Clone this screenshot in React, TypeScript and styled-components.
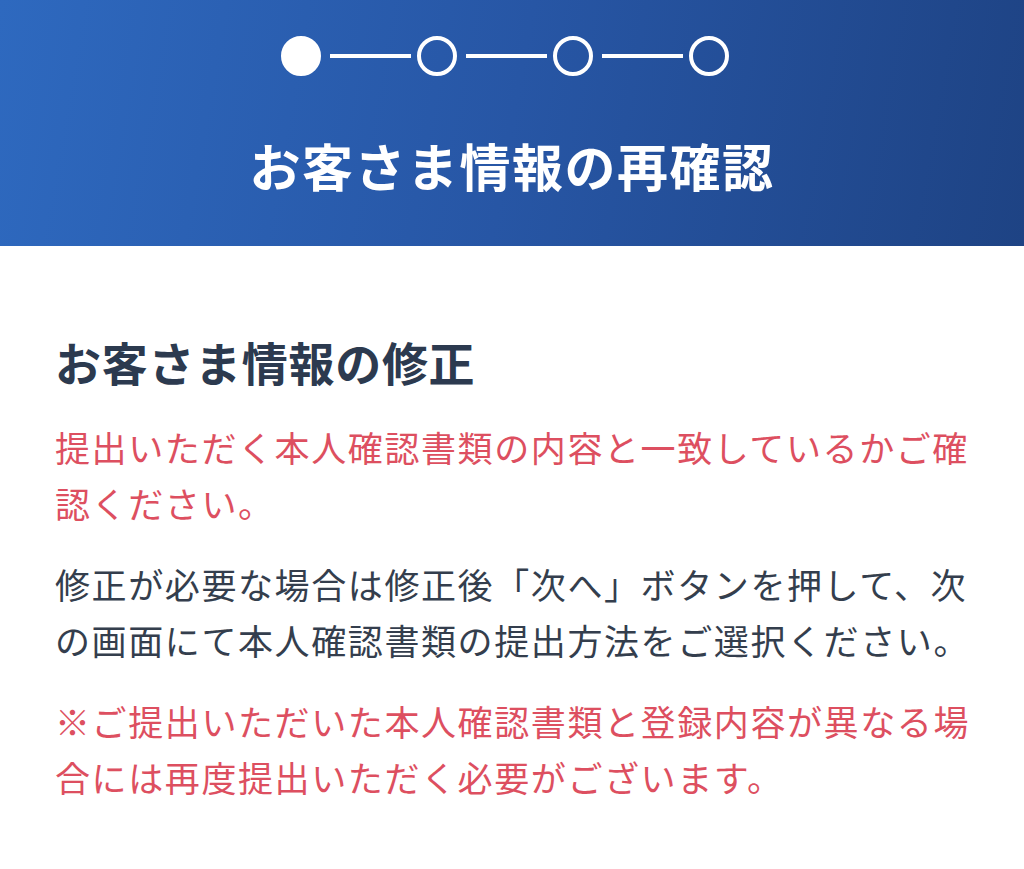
import React from 'react';
import styled, { createGlobalStyle } from 'styled-components';

const GlobalStyle = createGlobalStyle`
  html, body {
    margin: 0;
    padding: 0;
    background: #ffffff;
  }
  body {
    font-family: "Noto Sans CJK JP", "Noto Sans", sans-serif;
  }
`;

const steps = [true, false, false, false];

const ReconfirmPage = () => {
    return (
        <Page>
            <GlobalStyle />
            <Header>
                <Stepper>
                    {steps.map((done, index) => (
                        <React.Fragment key={index}>
                            {index > 0 && <StepLine />}
                            <StepDot $filled={done} />
                        </React.Fragment>
                    ))}
                </Stepper>
                <HeaderTitle>お客さま情報の再確認</HeaderTitle>
            </Header>

            <Content>
                <SectionTitle>お客さま情報の修正</SectionTitle>
                <Paragraph $tone="alert">
                    提出いただく本人確認書類の内容と一致しているかご確認ください。
                </Paragraph>
                <Paragraph>
                    修正が必要な場合は修正後「次へ」ボタンを押して、次の画面にて本人確認書類の提出方法をご選択ください。
                </Paragraph>
                <Paragraph $tone="alert">
                    ※ご提出いただいた本人確認書類と登録内容が異なる場合には再度提出いただく必要がございます。
                </Paragraph>
            </Content>
        </Page>
    );
};

const Page = styled.div`
    width: 100%;
    min-height: 869px;
    background: #fff;
    `;

const Header = styled.header`
    height: 246px;
    box-sizing: border-box;
    padding-top: 36px;
    display: flex;
    flex-direction: column;
    align-items: center;
    background: linear-gradient(100deg, #2e69bf 0%, #2756a5 50%, #1e4384 100%);
    `;

const Stepper = styled.div`
    display: flex;
    align-items: center;
    margin-right: 14px;
    `;

const StepDot = styled.span<{ $filled: boolean }>`
    width: 40px;
    height: 40px;
    box-sizing: border-box;
    border-radius: 50%;
    border: 4px solid #fff;
    background: ${({ $filled }) => ($filled ? '#fff' : 'transparent')};
    `;

const StepLine = styled.span`
    width: 81px;
    height: 4px;
    margin: 0 6px 0 9px;
    background: #fff;
    `;

const HeaderTitle = styled.h1`
    margin: 53px 0 0;
    color: #fff;
    font-size: 51px;
    line-height: 72px;
    font-weight: 700;
    letter-spacing: 1.5px;
    text-align: center;
    `;

const Content = styled.main`
    padding: 82px 40px 0 55px;
    `;

const SectionTitle = styled.h2`
    margin: 0 0 25px;
    color: #2c3a4f;
    font-size: 46px;
    line-height: 66px;
    font-weight: 700;
    letter-spacing: 0.7px;
    `;

const Paragraph = styled.p<{ $tone?: 'alert' }>`
    margin: 0 0 25px;
    color: ${({ $tone }) => ($tone === 'alert' ? '#dd4f60' : '#343e4d')};
    font-size: 35px;
    line-height: 56px;
    font-weight: 400;
    letter-spacing: 1.6px;
    `;

export default ReconfirmPage;
